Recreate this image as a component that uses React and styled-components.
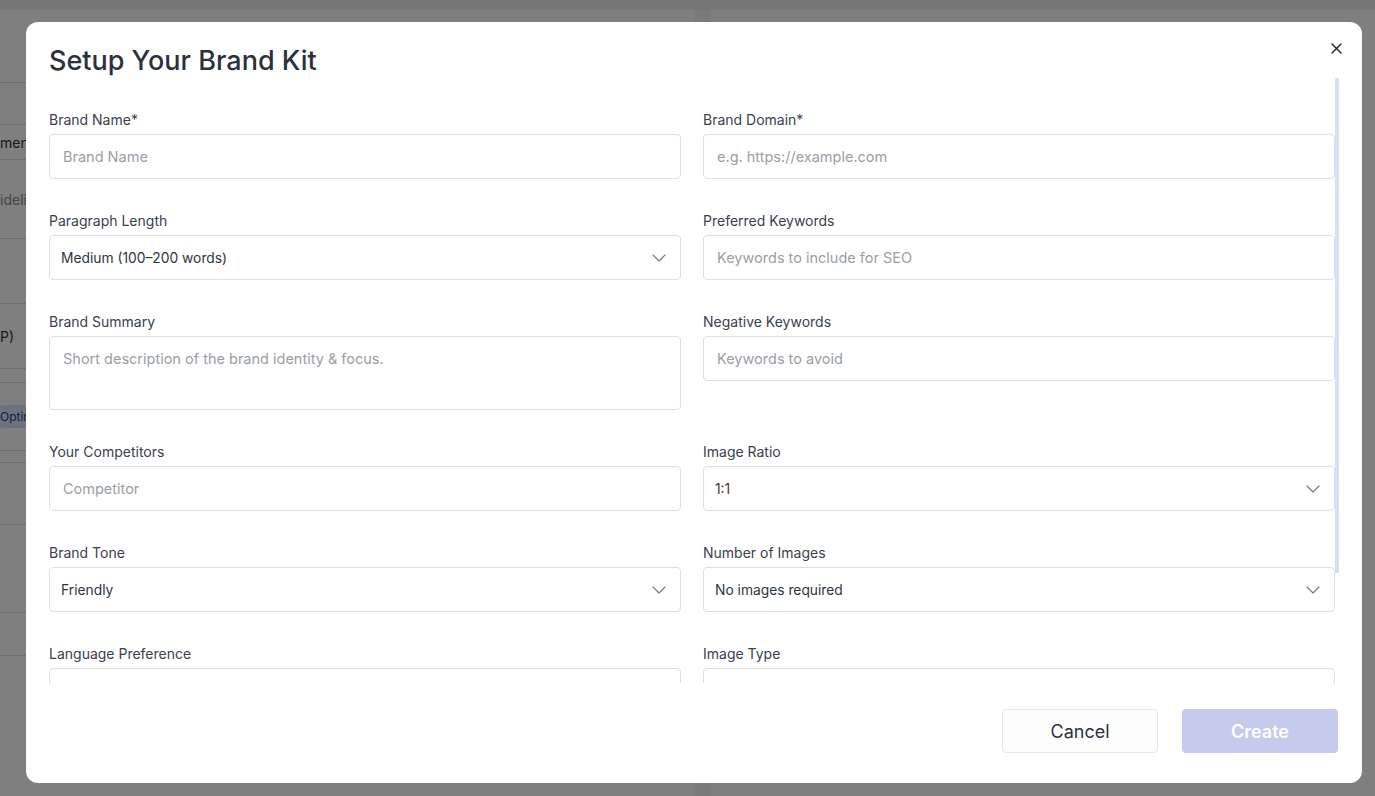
import React from "react";
import styled, { createGlobalStyle } from "styled-components";

const Global = createGlobalStyle`
  html, body { margin: 0; padding: 0; }
  body { font-family: Inter, "Noto Sans", Arial, sans-serif; background: #eceef3; overflow: hidden; }
  * { box-sizing: border-box; }
`;

/* ---------- background page ---------- */
const Page = styled.div`
  min-height: 100vh;
  padding-top: 10px;
  background: #eceef3;
`;
const Sheet = styled.div`
  min-height: calc(100vh - 10px);
  display: grid;
  grid-template-columns: 695px 1fr;
  column-gap: 15px;
  background: #f4f5f7;
`;
const TablePanel = styled.div`
  background: #ffffff;
  padding-top: 72px;
  display: flex;
  flex-direction: column;
`;
const SidePanel = styled.div`
  background: #ffffff;
`;
const BgRow = styled.div`
  height: ${(p) => p.h}px;
  border-top: 1px solid #dcdcdc;
  display: flex;
  align-items: center;
  font-size: 14px;
  color: ${(p) => (p.muted ? "#8a8a8a" : "#333")};
  white-space: nowrap;
  overflow: hidden;
`;
const BgChip = styled.span`
  background: #dbe6fb;
  color: #1f3d8a;
  font-size: 12px;
  padding: 4px 8px 4px 0;
  border-radius: 3px;
`;

/* ---------- modal ---------- */
const Overlay = styled.div`
  position: fixed;
  inset: 0;
  background: rgba(0, 0, 0, 0.5);
  display: flex;
  align-items: flex-start;
  padding: 22px 0 0 26px;
`;
const Modal = styled.div`
  position: relative;
  width: 1336px;
  background: #ffffff;
  border-radius: 12px;
  padding: 22px 23px 30px 23px;
  display: flex;
  flex-direction: column;
`;
const Title = styled.h2`
  margin: 0;
  font-size: 27px;
  line-height: 34px;
  font-weight: 500;
  color: #2b313d;
`;
const CloseBtn = styled.button`
  position: absolute;
  top: 19px;
  right: 19px;
  width: 14px;
  height: 14px;
  padding: 0;
  border: none;
  background: transparent;
  display: flex;
  align-items: center;
  justify-content: center;
  cursor: pointer;
`;
const ScrollWrap = styled.div`
  position: relative;
  height: 605px;
`;
const Scroller = styled.div`
  height: 100%;
  overflow-y: auto;
  padding: 32px 4px 3px 0;
  scrollbar-width: none;
  &::-webkit-scrollbar { display: none; }
`;
const ScrollThumb = styled.div`
  position: absolute;
  top: 0;
  right: 0;
  width: 4px;
  height: 495px;
  background: #d0e1f7;
`;
const Grid = styled.div`
  display: grid;
  grid-template-columns: 1fr 1fr;
  column-gap: 22px;
  row-gap: 32px;
`;
const Field = styled.div`
  display: flex;
  flex-direction: column;
  gap: 4px;
`;
const Label = styled.label`
  font-size: 14px;
  line-height: 20px;
  color: #3a414e;
`;
const TextInput = styled.input`
  height: 45px;
  width: 100%;
  border: 1px solid #dedfe2;
  border-radius: 4px;
  padding: 0 13px;
  font-family: inherit;
  font-size: 14.5px;
  color: #1f2937;
  outline: none;
  background: #fff;
  &::placeholder { color: #9a9ea6; }
`;
const TextArea = styled.textarea`
  height: 74px;
  width: 100%;
  border: 1px solid #dedfe2;
  border-radius: 4px;
  padding: 13px 13px;
  font-family: inherit;
  font-size: 14.5px;
  line-height: 18px;
  resize: none;
  outline: none;
  &::placeholder { color: #9a9ea6; }
`;
const SelectBox = styled.div`
  height: 45px;
  border: 1px solid #dedfe2;
  border-radius: 4px;
  padding: 0 14px 0 11px;
  display: flex;
  align-items: center;
  justify-content: space-between;
  font-size: 13.8px;
  color: #2f3540;
  background: #fff;
`;
const Footer = styled.div`
  display: flex;
  justify-content: flex-end;
  gap: 24px;
  padding-top: 26px;
  padding-right: 1px;
`;
const Button = styled.button`
  width: 156px;
  height: 44px;
  border-radius: 4px;
  font-family: inherit;
  font-size: 18px;
  cursor: pointer;
  border: 1px solid ${(p) => (p.primary ? "transparent" : "#e6e7ea")};
  background: ${(p) => (p.primary ? "#c5cbed" : "#fdfdfd")};
  color: ${(p) => (p.primary ? "#ffffff" : "#2d3340")};
  font-weight: ${(p) => (p.primary ? 600 : 400)};
`;

const Chevron = () => (
  <svg width="14" height="8" viewBox="0 0 14 8" fill="none">
    <path d="M1 1l6 6 6-6" stroke="#70757e" strokeWidth="1.1" strokeLinecap="round" strokeLinejoin="round" />
  </svg>
);

const Select = ({ value }) => (
  <SelectBox>
    <span>{value}</span>
    <Chevron />
  </SelectBox>
);

const fields = [
  { label: "Brand Name*", ph: "Brand Name" },
  { label: "Brand Domain*", ph: "e.g. https://example.com" },
  { label: "Paragraph Length", select: "Medium (100–200 words)" },
  { label: "Preferred Keywords", ph: "Keywords to include for SEO" },
  { label: "Brand Summary", area: "Short description of the brand identity & focus." },
  { label: "Negative Keywords", ph: "Keywords to avoid" },
  { label: "Your Competitors", ph: "Competitor" },
  { label: "Image Ratio", select: "1:1" },
  { label: "Brand Tone", select: "Friendly" },
  { label: "Number of Images", select: "No images required" },
  { label: "Language Preference", select: "English" },
  { label: "Image Type", select: "Realistic" },
  { label: "Target Audience", ph: "Who is this brand for?" },
  { label: "Call To Action", ph: "e.g. Book a demo" },
];

const bgRows = [
  { h: 42, t: "" },
  { h: 35, t: "mendations" },
  { h: 79, t: "idelines", muted: true },
  { h: 65, t: "" },
  { h: 65, t: "P)" },
  { h: 14, t: "" },
  { h: 68, chip: "Optimization" },
  { h: 12, t: "" },
  { h: 62, t: "" },
  { h: 88, t: "" },
  { h: 43, t: "" },
  { h: 140, t: "" },
];

export default function App() {
  return (
    <>
      <Global />
      <Page>
        <Sheet>
          <TablePanel>
            {bgRows.map((r, i) => (
              <BgRow key={i} h={r.h} muted={r.muted}>
                {r.chip ? <BgChip>{r.chip}</BgChip> : r.t}
              </BgRow>
            ))}
          </TablePanel>
          <SidePanel />
        </Sheet>
      </Page>
      <Overlay>
        <Modal>
          <Title>Setup Your Brand Kit</Title>
          <CloseBtn aria-label="Close">
            <svg width="11" height="11" viewBox="0 0 11 11">
              <path d="M1 1l9 9M10 1l-9 9" stroke="#1a1d23" strokeWidth="1.4" strokeLinecap="round" />
            </svg>
          </CloseBtn>
          <ScrollWrap>
            <Scroller>
              <Grid>
                {fields.map((f) => (
                  <Field key={f.label}>
                    <Label>{f.label}</Label>
                    {f.select ? (
                      <Select value={f.select} />
                    ) : f.area ? (
                      <TextArea placeholder={f.area} />
                    ) : (
                      <TextInput placeholder={f.ph} />
                    )}
                  </Field>
                ))}
              </Grid>
            </Scroller>
            <ScrollThumb />
          </ScrollWrap>
          <Footer>
            <Button>Cancel</Button>
            <Button primary>Create</Button>
          </Footer>
        </Modal>
      </Overlay>
    </>
  );
}
